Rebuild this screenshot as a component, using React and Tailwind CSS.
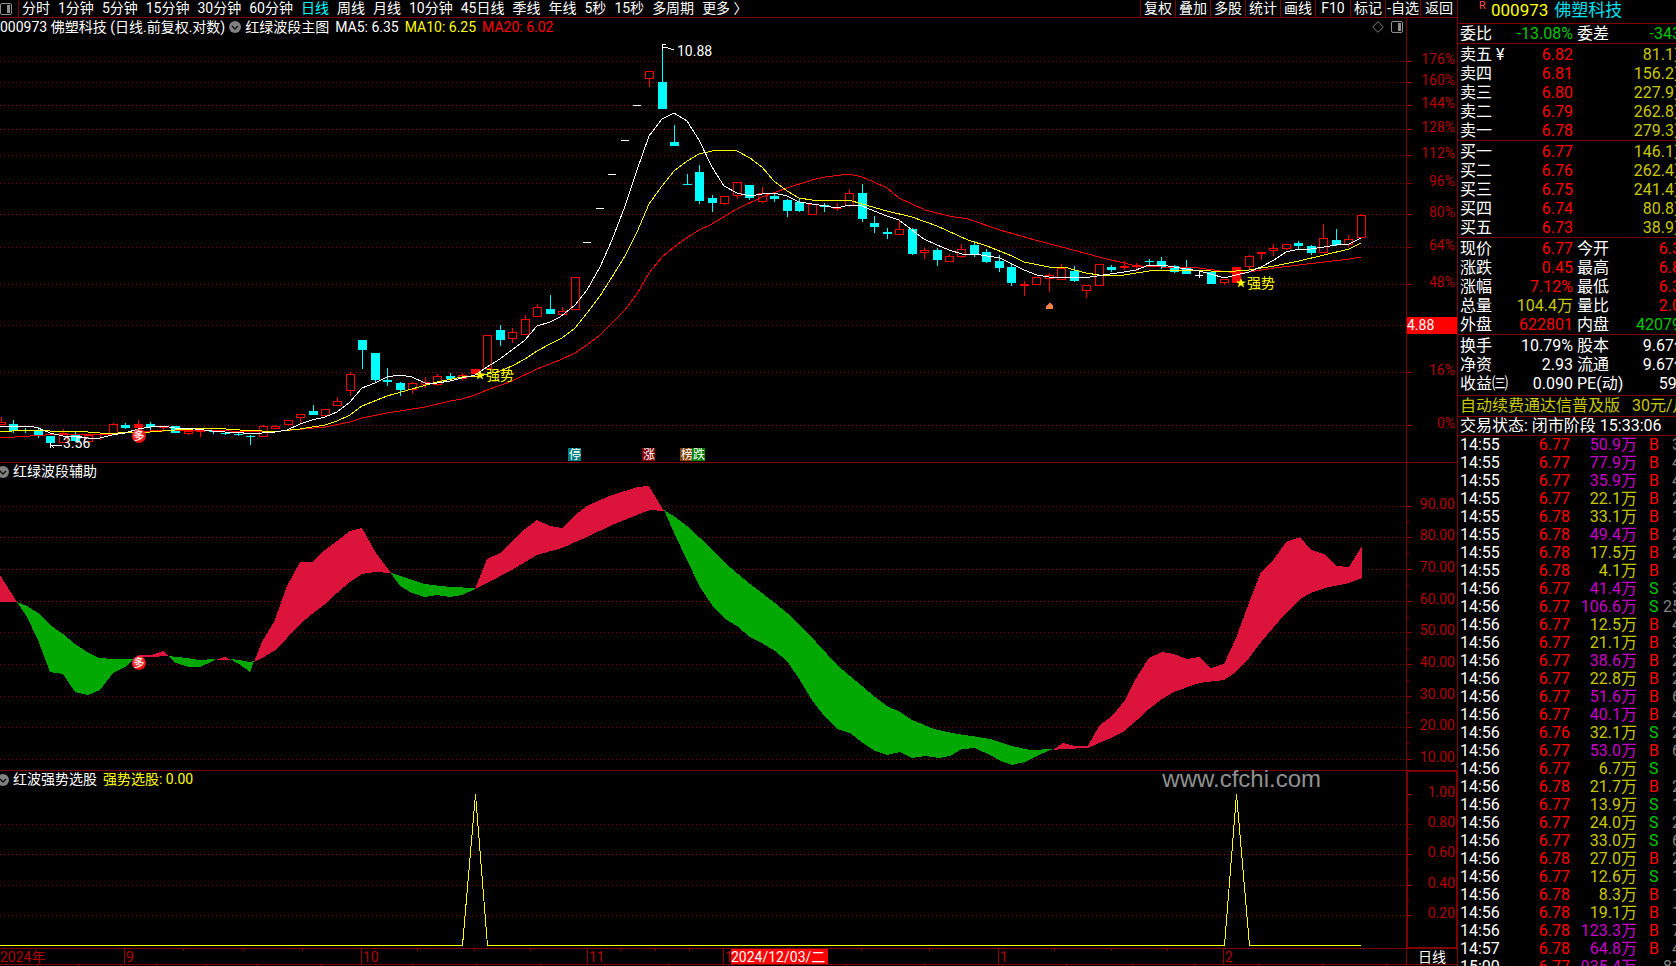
import { useState } from 'react';
import clsx from 'clsx';

const periods = [
  '分时', '1分钟', '5分钟', '15分钟', '30分钟', '60分钟', '日线', '周线', '月线',
  '10分钟', '45日线', '季线', '年线', '5秒', '15秒', '多周期', '更多 〉',
];

const tools = ['复权', '叠加', '多股', '统计', '画线', 'F10', '标记', '-自选', '返回'];

// [index, kind, high, bodyTop, bodyBottom, low]
// kinds: r hollow red, R solid red, c cyan, w white
const candles = [
  [-1, 'r', 417, 422, 425, 425], [0, 'c', 420, 424, 431, 433], [1, 'c', 428, 430, 431, 433],
  [2, 'c', 427, 430, 435, 438], [3, 'c', 436, 436, 443, 443], [4, 'r', 429, 433, 443, 443],
  [5, 'c', 432, 435, 441, 442], [6, 'r', 435, 435, 442, 442], [7, 'r', 433, 434, 435, 440],
  [8, 'r', 423, 424, 435, 435], [9, 'c', 423, 425, 428, 429], [10, 'R', 420, 424, 428, 428],
  [11, 'c', 422, 424, 427, 430], [12, 'r', 427, 427, 428, 432], [13, 'c', 426, 426, 433, 433],
  [14, 'r', 431, 431, 434, 435], [15, 'r', 431, 431, 432, 437], [16, 'c', 431, 431, 432, 434],
  [17, 'c', 432, 433, 434, 435], [18, 'c', 433, 434, 435, 436], [19, 'c', 435, 436, 437, 445],
  [20, 'r', 425, 426, 437, 437], [21, 'r', 425, 426, 429, 429], [22, 'r', 420, 420, 425, 426],
  [23, 'r', 414, 414, 418, 423], [24, 'c', 405, 411, 415, 415], [25, 'r', 409, 409, 416, 416],
  [26, 'r', 397, 401, 406, 406], [27, 'r', 372, 374, 391, 396], [28, 'c', 340, 340, 350, 369],
  [29, 'c', 353, 353, 380, 383], [30, 'c', 368, 380, 382, 386], [31, 'c', 382, 383, 390, 396],
  [32, 'r', 382, 383, 390, 394], [33, 'r', 377, 382, 385, 388], [34, 'r', 374, 376, 385, 386],
  [35, 'c', 373, 376, 379, 379], [36, 'r', 373, 375, 379, 381], [37, 'R', 369, 369, 374, 374],
  [38, 'r', 335, 335, 369, 369], [39, 'c', 325, 330, 340, 346], [40, 'r', 328, 332, 339, 343],
  [41, 'r', 315, 319, 335, 335], [42, 'r', 304, 307, 317, 317], [43, 'c', 295, 309, 314, 314],
  [44, 'r', 307, 311, 315, 315], [45, 'r', 277, 277, 310, 310], [46, 'w', 242, 242, 243, 243],
  [47, 'w', 208, 208, 209, 209], [48, 'w', 174, 174, 175, 175], [49, 'w', 140, 140, 141, 141],
  [50, 'w', 105, 105, 106, 106], [51, 'r', 71, 71, 79, 87], [52, 'c', 45, 82, 109, 109],
  [53, 'c', 125, 142, 146, 146], [54, 'c', 174, 184, 185, 185], [55, 'c', 165, 172, 201, 204],
  [56, 'c', 195, 198, 203, 212], [57, 'r', 196, 196, 204, 205], [58, 'r', 182, 182, 196, 199],
  [59, 'c', 185, 185, 198, 200], [60, 'r', 187, 193, 202, 203], [61, 'c', 193, 196, 199, 202],
  [62, 'c', 199, 200, 211, 217], [63, 'c', 199, 202, 211, 212], [64, 'r', 204, 204, 215, 215],
  [65, 'c', 203, 205, 207, 212], [66, 'r', 203, 208, 209, 211], [67, 'r', 189, 193, 206, 207],
  [68, 'c', 184, 193, 219, 222], [69, 'c', 216, 223, 227, 233], [70, 'c', 228, 232, 234, 239],
  [71, 'r', 221, 229, 235, 235], [72, 'c', 228, 229, 254, 255], [73, 'r', 248, 250, 253, 259],
  [74, 'c', 248, 250, 260, 266], [75, 'r', 254, 256, 262, 262], [76, 'r', 244, 249, 257, 258],
  [77, 'c', 241, 245, 254, 257], [78, 'c', 249, 252, 262, 263], [79, 'c', 255, 261, 268, 272],
  [80, 'c', 264, 267, 283, 286], [81, 'r', 281, 284, 286, 296], [82, 'r', 277, 277, 285, 285],
  [83, 'r', 273, 275, 279, 292], [84, 'r', 264, 268, 280, 280], [85, 'c', 266, 271, 281, 282],
  [86, 'r', 285, 285, 291, 298], [87, 'r', 264, 264, 286, 286], [88, 'c', 265, 267, 270, 272],
  [89, 'r', 261, 266, 268, 270], [90, 'r', 263, 265, 267, 271], [91, 'c', 259, 261, 262, 267],
  [92, 'c', 257, 261, 267, 269], [93, 'c', 265, 266, 272, 273], [94, 'c', 260, 267, 274, 274],
  [95, 'w', 272, 275, 276, 278], [96, 'c', 272, 272, 284, 284], [97, 'r', 279, 279, 283, 285],
  [98, 'R', 267, 267, 283, 283], [99, 'r', 255, 256, 267, 269], [100, 'r', 252, 252, 254, 260],
  [101, 'r', 244, 248, 251, 256], [102, 'r', 244, 244, 249, 250], [103, 'c', 241, 243, 246, 249],
  [104, 'c', 245, 246, 253, 255], [105, 'r', 224, 238, 253, 253], [106, 'c', 229, 240, 245, 246],
  [107, 'r', 235, 239, 245, 247], [108, 'r', 214, 215, 238, 238],
];

const candleColors = { r: '#ff0000', R: '#ff0000', c: '#00ffff', w: '#ffffff' };

const ma5 = '0,426 30,426 38,428 50,433 63,436 75,436 88,438 100,438 112,435 125,433 138,429 150,427 163,426 175,428 195,429 212,431 225,432 237,432 250,434 262,433 275,432 287,430 300,424 312,420 325,417 337,412 350,402 362,388 375,383 387,377 400,375 412,377 425,383 437,383 450,381 462,378 475,375 487,367 500,359 512,350 525,340 537,326 550,322 560,317 575,305 587,290 600,267 612,240 625,206 637,170 649,136 662,119 674,113 687,121 699,140 712,167 724,186 737,193 750,196 762,194 774,193 787,196 799,202 812,204 825,206 837,208 849,205 862,206 874,211 887,216 899,220 912,230 924,239 937,245 949,250 962,254 974,254 987,256 1000,258 1012,264 1024,270 1037,275 1049,277 1090,277 1110,274 1124,272 1136,270 1149,265 1161,265 1174,267 1186,269 1199,271 1211,274 1224,278 1236,275 1249,272 1261,267 1274,260 1286,252 1299,249 1311,249 1324,247 1336,245 1349,244 1361,238';
const ma10 = '0,432 25,430 50,431 75,431 100,433 118,433 150,432 175,430 212,428 240,430 262,431 281,431 300,429 325,425 337,421 350,415 362,406 387,396 412,389 437,382 462,377 480,376 500,371 512,366 525,359 537,351 550,344 562,338 575,328 587,313 600,296 612,277 625,256 637,232 649,204 662,186 674,171 687,161 699,154 712,151 724,150 737,151 750,158 762,167 774,181 787,191 799,198 812,200 825,200 837,201 849,200 862,204 887,211 912,217 937,226 968,240 987,246 1012,256 1024,262 1049,267 1064,267 1086,273 1099,275 1124,275 1149,271 1161,270 1186,270 1211,271 1236,271 1249,270 1274,266 1299,261 1324,255 1349,249 1361,243';
const ma20 = '0,438 30,436 60,434 112,434 150,431 212,430 250,432 281,431 325,427 350,422 362,418 387,413 425,407 450,401 462,399 475,395 487,390 512,381 537,369 560,360 575,353 587,345 600,335 612,323 625,310 637,294 649,273 662,257 674,247 685,239 699,230 712,224 737,209 762,197 787,188 812,180 825,177 849,174 862,177 874,182 887,188 899,198 925,210 949,216 968,219 1000,230 1035,240 1062,247 1099,257 1136,266 1161,267 1199,268 1236,273 1249,272 1274,268 1299,265 1324,262 1349,259 1361,257';

const redWaves = [
  '0,575 17,602 0,602',
  '135,658 138,655 151,655 163,651 168,656 150,657 138,657',
  '215,660 225,657 231,660',
  '254,662 262,642 274,622 287,586 300,562 312,562 325,550 337,541 350,531 362,528 376,553 391,573 375,572 362,574 350,582 337,593 324,605 312,614 300,624 287,638 274,651 262,658',
  '475,589 487,559 500,553 512,541 525,529 537,520 550,526 562,528 575,515 587,506 600,500 612,495 625,491 637,487 649,486 664,511 650,510 637,515 612,525 587,537 562,548 537,555 512,570 487,583',
  '1053,750 1063,743 1075,746 1088,746 1099,726 1113,715 1125,700 1135,680 1149,658 1162,652 1174,654 1187,659 1199,657 1211,668 1224,664 1236,638 1250,600 1261,572 1274,559 1286,542 1300,537 1311,550 1324,554 1336,566 1349,567 1362,546 1362,578 1349,583 1325,588 1311,593 1300,599 1285,614 1261,642 1249,658 1236,672 1224,680 1199,683 1174,692 1162,699 1149,709 1137,720 1123,732 1113,737 1088,748 1063,749',
];

const greenWaves = [
  '17,602 27,606 38,613 50,625 63,634 75,644 87,652 99,658 112,659 133,659 125,667 113,673 100,690 88,695 75,692 63,674 50,672 38,640 27,617',
  '168,656 187,658 199,660 215,659 213,661 200,667 188,667 176,663',
  '230,659 239,660 250,662 254,661 250,672 239,664',
  '391,573 412,580 425,584 450,587 475,588 475,589 462,595 450,597 437,595 425,597 412,593 400,586',
  '664,510 675,517 687,526 700,538 725,563 750,584 775,603 787,613 806,631 837,665 856,681 875,697 887,706 900,712 912,720 934,729 957,734 972,736 990,739 1012,746 1030,750 1053,749 1039,755 1025,762 1012,765 1003,762 990,755 975,748 962,749 950,756 939,758 925,756 912,758 900,752 887,755 875,751 863,743 850,733 837,729 825,717 812,700 800,680 787,661 775,651 762,643 750,637 737,626 725,619 712,605 700,587 687,560 676,537',
];

const priceTicks = [
  [61, '176%'], [82, '160%'], [105, '144%'], [129, '128%'], [155, '112%'], [183, '96%'],
  [214, '80%'], [247, '64%'], [284, '48%'], [325, ''], [372, '16%'], [425, '0%'],
];
const waveTicks = [
  [506, '90.00'], [537, '80.00'], [569, '70.00'], [601, '60.00'], [632, '50.00'],
  [664, '40.00'], [696, '30.00'], [727, '20.00'], [759, '10.00'],
];
const pickTicks = [[794, '1.00'], [824, '0.80'], [854, '0.60'], [885, '0.40'], [915, '0.20']];

const months = [[124, '9'], [361, '10'], [587, '11'], [723, '12'], [998, '1'], [1223, '2']];
const weekTicks = [183, 243, 302, 417, 474, 530, 620, 655, 689, 861, 929, 1054, 1111, 1167];
const footTicks = [
  37, 79, 121, 156, 206, 256, 320, 412, 476, 540, 604, 668, 732, 782, 846, 924, 1002, 1066,
  1132, 1195, 1259, 1323, 1387,
];

const tags = [
  [568, '停', '#008080'], [642, '涨', '#800000'], [680, '榜', '#804000'], [692, '跌', '#008000'],
];

const sells = [
  ['卖五 ¥', '6.82', '81.1万'], ['卖四', '6.81', '156.2万'], ['卖三', '6.80', '227.9万'],
  ['卖二', '6.79', '262.8万'], ['卖一', '6.78', '279.3万'],
];
const buys = [
  ['买一', '6.77', '146.1万'], ['买二', '6.76', '262.4万'], ['买三', '6.75', '241.4万'],
  ['买四', '6.74', '80.8万'], ['买五', '6.73', '38.9万'],
];

const RED = 'text-[#ff0000]';
const GREEN = 'text-[#00c800]';
const YELLOW = 'text-[#c8c800]';
const WHITE = 'text-white';

const quotes = [
  ['现价', '6.77', RED, '今开', '6.35', RED],
  ['涨跌', '0.45', RED, '最高', '6.83', RED],
  ['涨幅', '7.12%', RED, '最低', '6.30', RED],
  ['总量', '104.4万', YELLOW, '量比', '2.07', RED],
  ['外盘', '622801', RED, '内盘', '420790', GREEN],
];
const basics = [
  ['换手', '10.79%', WHITE, '股本', '9.67亿', WHITE],
  ['净资', '2.93', WHITE, '流通', '9.67亿', WHITE],
  ['收益㈢', '0.090', WHITE, 'PE(动)', '59.2', WHITE],
];

const trades = [
  ['14:55', '6.77', '50.9', 'B', '36'], ['14:55', '6.77', '77.9', 'B', '43'],
  ['14:55', '6.77', '35.9', 'B', '41'], ['14:55', '6.77', '22.1', 'B', '25'],
  ['14:55', '6.78', '33.1', 'B', '18'], ['14:55', '6.78', '49.4', 'B', '27'],
  ['14:55', '6.78', '17.5', 'B', '22'], ['14:55', '6.78', '4.1', 'B', '7'],
  ['14:56', '6.77', '41.4', 'S', '30'], ['14:56', '6.77', '106.6', 'S', '251'],
  ['14:56', '6.77', '12.5', 'B', '42'], ['14:56', '6.77', '21.1', 'B', '33'],
  ['14:56', '6.77', '38.6', 'B', '28'], ['14:56', '6.77', '22.8', 'B', '21'],
  ['14:56', '6.77', '51.6', 'B', '62'], ['14:56', '6.77', '40.1', 'B', '45'],
  ['14:56', '6.76', '32.1', 'S', '26'], ['14:56', '6.77', '53.0', 'B', '60'],
  ['14:56', '6.77', '6.7', 'S', '9'], ['14:56', '6.78', '21.7', 'B', '24'],
  ['14:56', '6.77', '13.9', 'S', '14'], ['14:56', '6.77', '24.0', 'S', '23'],
  ['14:56', '6.77', '33.0', 'S', '61'], ['14:56', '6.78', '27.0', 'B', '29'],
  ['14:56', '6.77', '12.6', 'S', '15'], ['14:56', '6.78', '8.3', 'B', '11'],
  ['14:56', '6.78', '19.1', 'B', '17'], ['14:56', '6.78', '123.3', 'B', '75'],
  ['14:57', '6.78', '64.8', 'B', '44'], ['15:00', '6.77', '935.4', '', '816'],
];

function Candle({ data }) {
  const [index, kind, high, top, bottom, low] = data;
  const x = Math.floor(13.5 + 12.48 * index);
  const color = candleColors[kind];
  const hollow = kind === 'r' && bottom - top > 2;
  return (
    <g fill={color}>
      {high < top && <rect x={x} y={high} width="1" height={top - high} />}
      {low > bottom && <rect x={x} y={bottom} width="1" height={low - bottom} />}
      {hollow ? (
        <rect x={x - 3.5} y={top + 0.5} width="8" height={bottom - top - 1} fill="none" stroke={color} />
      ) : (
        <rect x={x - 4} y={top} width={kind === 'w' ? 8 : 9} height={bottom - top} />
      )}
    </g>
  );
}

function GridLines({ ticks }) {
  return ticks.map(([y]) => (
    <line key={y} x1="0" x2="100%" y1={y + 0.5} y2={y + 0.5} stroke="#900000" strokeDasharray="1 3" />
  ));
}

function AxisTicks({ ticks, minor }) {
  return ticks.map(([y, label], i) => (
    <g key={y}>
      <rect x="0" y={y} width="5" height="1" fill="#900000" />
      {minor && ticks[i + 1] && (
        <rect x="0" y={Math.round((y + ticks[i + 1][0]) / 2)} width="2" height="1" fill="#900000" />
      )}
      <text x="48" y={y + 3} textAnchor="end" fill="#b40000" fontSize="14">{label}</text>
    </g>
  ));
}

function LongBall({ y }) {
  return (
    <g shapeRendering="auto">
      <circle cx="139" cy={y} r="7" fill="url(#ball)" />
      <text x="139" y={y + 4} textAnchor="middle" fill="#fff" fontSize="11">多</text>
    </g>
  );
}

function BallGradient() {
  return (
    <defs>
      <radialGradient id="ball" cx="0.4" cy="0.35" r="0.7">
        <stop offset="0" stopColor="#ff8080" />
        <stop offset="0.5" stopColor="#f03030" />
        <stop offset="1" stopColor="#e00000" />
      </radialGradient>
    </defs>
  );
}

function StrongMark({ x, y }) {
  return (
    <g fill="#ffff00" shapeRendering="auto">
      <polygon
        points="0,-5 1.3,-1.6 5,-1.5 2.1,0.8 3.1,4.4 0,2.3 -3.1,4.4 -2.1,0.8 -5,-1.5 -1.3,-1.6"
        transform={`translate(${x} ${y})`}
      />
      <text x={x + 6} y={y + 5} fontSize="14">强势</text>
    </g>
  );
}

function DropIcon() {
  return (
    <svg className="h-3 w-3 shrink-0" viewBox="0 0 12 12" aria-hidden="true">
      <circle cx="6" cy="6" r="6" fill="#808080" />
      <path d="M3 5l3 3 3-3" fill="none" stroke="#101010" strokeWidth="1.4" />
    </svg>
  );
}

function PaneIcon() {
  return (
    <svg className="h-3 w-3 shrink-0" viewBox="0 0 12 12" aria-hidden="true">
      <rect x="0.5" y="0.5" width="11" height="11" rx="1.5" fill="none" stroke="#909090" />
      <rect x="7" y="2" width="3" height="8" fill="#909090" />
    </svg>
  );
}

function BookTable({ rows }) {
  return (
    <table className="w-[232px] table-fixed border-b border-[#800000] pt-px border-separate border-spacing-0">
      <colgroup>
        <col className="w-[52px]" />
        <col className="w-[63px]" />
        <col className="w-[117px]" />
      </colgroup>
      <tbody>
        {rows.map(([label, price, amount]) => (
          <tr key={label} className="h-[19px]">
            <th scope="row" className="pl-[2px] text-left font-normal whitespace-nowrap">{label}</th>
            <td className="text-right text-[#ff0000]">{price}</td>
            <td className="text-right text-[#c8c800]">{amount}</td>
          </tr>
        ))}
      </tbody>
    </table>
  );
}

function QuoteTable({ rows, className }) {
  return (
    <table className={clsx('w-[232px] table-fixed border-b border-[#800000] border-separate border-spacing-0', className)}>
      <colgroup>
        <col className="w-[52px]" />
        <col className="w-[63px]" />
        <col className="w-[50px]" />
        <col className="w-[67px]" />
      </colgroup>
      <tbody>
        {rows.map(([name, value, color, name2, value2, color2]) => (
          <tr key={name} className="h-[19px]">
            <th scope="row" className="pl-[2px] text-left font-normal whitespace-nowrap">{name}</th>
            <td className={clsx('text-right', color)}>{value}</td>
            <th scope="row" className="pl-1 text-left font-normal whitespace-nowrap">{name2}</th>
            <td className={clsx('text-right', color2)}>{value2}</td>
          </tr>
        ))}
      </tbody>
    </table>
  );
}

export default function App() {
  const [period, setPeriod] = useState('日线');

  return (
    <div className="flex h-screen overflow-hidden bg-black font-[Roboto,'Noto_Sans_CJK_SC','Microsoft_YaHei',sans-serif] text-sm leading-[17px] text-white">
      <main className="flex min-w-0 flex-1 flex-col">
        {/* Period and tool bar */}
        <nav className="flex h-[18px] shrink-0 items-stretch border-b border-[#800000] whitespace-nowrap">
          <button aria-label="侧栏" className="flex w-[19px] shrink-0 items-center border-r border-[#800000]">
            <PaneIcon />
          </button>
          <div className="flex min-w-0 flex-1 gap-2 pl-[3px]">
            {periods.map((name) => (
              <button
                key={name}
                onClick={() => setPeriod(name)}
                className={clsx('shrink-0', name === period && 'text-[#00ffff]')}
              >
                {name}
              </button>
            ))}
          </div>
          {tools.map((name) => (
            <button key={name} className="w-[35px] shrink-0 border-l border-[#800000] text-center last:w-[37px]">
              {name}
            </button>
          ))}
        </nav>

        {/* Candlestick panel */}
        <section className="flex border-b border-[#800000]">
          <div className="min-w-0 flex-1">
            <header className="flex h-[18px] items-center whitespace-nowrap">
              <span>000973 佛塑科技 (日线.前复权.对数)</span>
              <button className="ml-1 flex items-center gap-1"><DropIcon />红绿波段主图</button>
              <span className="ml-[6px]">MA5: 6.35</span>
              <span className="ml-[6px] text-[#ffff00]">MA10: 6.25</span>
              <span className="ml-[6px] text-[#ff0000]">MA20: 6.02</span>
              <button aria-label="标注" className="ml-auto">
                <svg className="h-3 w-3" viewBox="0 0 12 12" aria-hidden="true">
                  <path d="M6 0.7L11.3 6 6 11.3 0.7 6z" fill="none" stroke="#808080" />
                </svg>
              </button>
              <button aria-label="窗格" className="mr-[3px] ml-[7px]"><PaneIcon /></button>
            </header>
            <svg className="block h-[426px] w-full" shapeRendering="crispEdges">
              <BallGradient />
              <g transform="translate(0 -36)">
                <GridLines ticks={priceTicks} />
                {candles.map((c) => <Candle key={c[0]} data={c} />)}
                <polyline points={ma20} fill="none" stroke="#ff0000" />
                <polyline points={ma10} fill="none" stroke="#ffff00" />
                <polyline points={ma5} fill="none" stroke="#ffffff" />
                <path d="M662.5 44v6M662 44h4M663 47l5 1 6 2" fill="none" stroke="#fff" />
                <text x="677" y="56" fill="#fff" fontSize="14">10.88</text>
                <path d="M51 445.5h11M50.5 442v6M51 445l3 3" fill="none" stroke="#fff" />
                <text x="63" y="448" fill="#fff" fontSize="14">3.56</text>
                <LongBall y={436} />
                <StrongMark x={480} y={375} />
                <StrongMark x={1241} y={283} />
                <path d="M1049 303h1l3 3v3h-7v-3z" fill="#ff8040" />
                {tags.map(([x, label, fill]) => (
                  <g key={label}>
                    <rect x={x} y="448" width="13" height="13" fill={fill} />
                    <text x={x + 1} y="459" fill="#fff" fontSize="12">{label}</text>
                  </g>
                ))}
              </g>
            </svg>
          </div>
          <svg className="block h-[444px] w-[51px] shrink-0 border-l border-[#800000]" shapeRendering="crispEdges">
            <g transform="translate(0 -18)">
              <AxisTicks ticks={priceTicks} />
              <rect x="0" y="317" width="50" height="17" fill="#ff0000" />
              <text x="0" y="330" fill="#fff" fontSize="14">4.88</text>
            </g>
          </svg>
        </section>

        {/* Wave band panel */}
        <section className="flex border-b border-[#800000]">
          <div className="min-w-0 flex-1">
            <header className="flex h-[18px] items-start">
              <button className="-ml-[3px] flex items-center gap-1"><DropIcon />红绿波段辅助</button>
            </header>
            <svg className="block h-[289px] w-full" shapeRendering="crispEdges">
              <g transform="translate(0 -481)">
                <GridLines ticks={waveTicks} />
                {redWaves.map((points) => <polygon key={points} points={points} fill="#dc143c" />)}
                {greenWaves.map((points) => <polygon key={points} points={points} fill="#00a800" />)}
                <LongBall y={663} />
              </g>
            </svg>
          </div>
          <svg className="block h-[307px] w-[51px] shrink-0 border-l border-[#800000]" shapeRendering="crispEdges">
            <g transform="translate(0 -463)">
              <AxisTicks ticks={waveTicks} minor />
            </g>
          </svg>
        </section>

        {/* Signal panel */}
        <section className="relative flex border-b border-[#800000]">
          <div className="min-w-0 flex-1">
            <header className="flex h-[18px] items-start">
              <button className="-ml-[3px] flex items-center gap-1"><DropIcon />红波强势选股</button>
              <span className="ml-[6px] text-[#ffff00]">强势选股: 0.00</span>
            </header>
            <svg className="block h-[159px] w-full" shapeRendering="crispEdges">
              <g transform="translate(0 -789)">
                <GridLines ticks={pickTicks.slice(1)} />
                <polyline
                  points="0,945.5 462.5,945.5 475.5,794 487.5,945.5 1224.5,945.5 1236.5,794 1249.5,945.5 1361,945.5"
                  fill="none"
                  stroke="#ffff00"
                />
              </g>
            </svg>
          </div>
          <svg className="block h-[177px] w-[51px] shrink-0 border-l border-[#800000]" shapeRendering="crispEdges">
            <g transform="translate(0 -771)">
              <path d="M0 771.5h49.5v176H0.5v-176" fill="none" stroke="#800000" />
              <AxisTicks ticks={pickTicks} minor />
            </g>
          </svg>
          <p className="absolute -top-1 right-[136px] font-['Liberation_Sans',Arial,sans-serif] text-2xl leading-6 text-[#909090]">
            www.cfchi.com
          </p>
        </section>

        {/* Date axis */}
        <footer className="flex h-4 shrink-0 border-b border-[#800000]">
          <svg className="block h-[15px] min-w-0 flex-1" shapeRendering="crispEdges">
            <text x="0" y="13" fill="#b40000" fontSize="14">2024年</text>
            {months.map(([x, label]) => (
              <g key={x}>
                <rect x={x} y="0" width="1" height="15" fill="#900000" />
                <text x={x + 2} y="13" fill="#b40000" fontSize="14">{label}</text>
              </g>
            ))}
            {weekTicks.map((x) => <rect key={x} x={x} y="0" width="1" height="2" fill="#900000" />)}
            <rect x="731" y="0" width="97" height="15" fill="#ff0000" />
            <text x="731" y="13" fill="#fff" fontSize="14">2024/12/03/二</text>
          </svg>
          <button className="w-[51px] shrink-0 border-l border-[#800000] text-center">日线</button>
        </footer>
        <svg className="block h-px w-full shrink-0" shapeRendering="crispEdges">
          {footTicks.map((x) => <rect key={x} x={x} y="0" width="1" height="1" fill="#900000" />)}
        </svg>
      </main>

      {/* Quote sidebar */}
      <aside className="w-[219px] shrink-0 overflow-hidden border-l border-[#800000] text-base leading-[19px]">
        <h1 className="flex h-6 w-[232px] items-start border-b border-[#800000] pl-[21px] text-[17px] leading-[21px]">
          <sup className="top-0 w-3 text-[11px] leading-3 text-[#ff5050]">R</sup>
          <span className="text-[#ffff00]">000973</span>
          <span className="ml-[6px] text-[#00e0f0]">佛塑科技</span>
        </h1>
        <QuoteTable rows={[['委比', '-13.08%', GREEN, '委差', '-3436', GREEN]]} />
        <BookTable rows={sells} />
        <BookTable rows={buys} />
        <QuoteTable rows={quotes} className="pt-px" />
        <QuoteTable rows={basics} className="pt-px pb-[2px]" />
        <p className="flex h-[21px] w-[232px] gap-3 border-b border-[#800000] pl-[2px] whitespace-nowrap text-[#c8c800]">
          <span>自动续费通达信普及版</span>
          <span>30元/月</span>
        </p>
        <p className="h-[19px] w-[232px] border-b border-[#800000] pl-[2px] leading-[17px] whitespace-nowrap">
          交易状态: 闭市阶段 15:33:06
        </p>
        <table className="w-[232px] table-fixed leading-[18px]">
          <colgroup>
            <col className="w-[52px]" />
            <col className="w-[60px]" />
            <col className="w-[67px]" />
            <col className="w-[26px]" />
            <col className="w-[27px]" />
          </colgroup>
          <tbody>
            {trades.map(([time, price, volume, side, count], i) => (
              <tr key={i} className="h-[18px]">
                <td className="pl-[2px]">{time}</td>
                <td className="text-right text-[#ff0000]">{price}</td>
                <td className={clsx('text-right', Number(volume) > 35 ? 'text-[#c800c8]' : 'text-[#c8c800]')}>
                  {volume}万
                </td>
                <td className={clsx('pl-3', side === 'S' ? 'text-[#00c800]' : 'text-[#ff0000]')}>{side}</td>
                <td className="text-right text-[#808080]">{count}</td>
              </tr>
            ))}
          </tbody>
        </table>
      </aside>
    </div>
  );
}
